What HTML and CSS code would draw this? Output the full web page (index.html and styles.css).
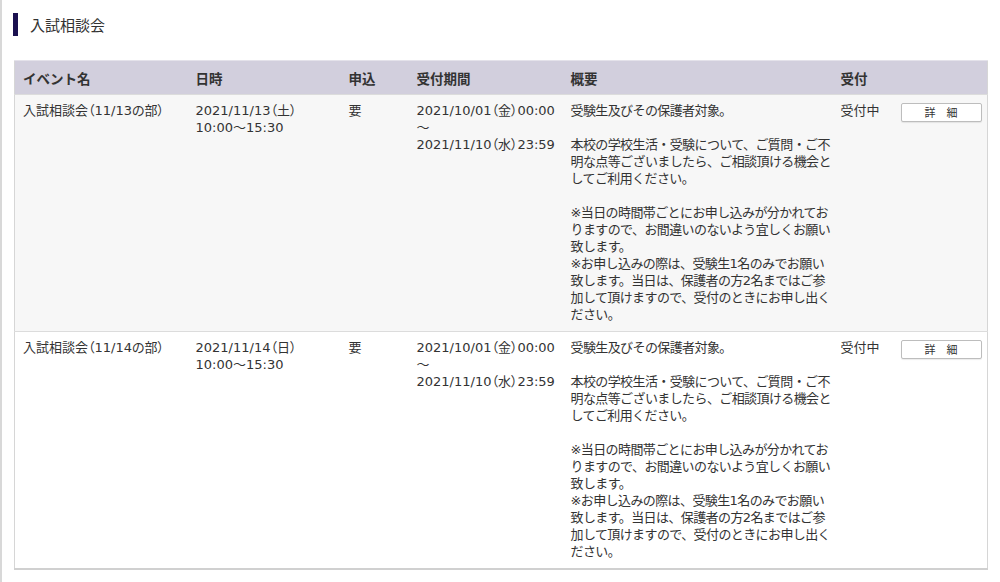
FILE: index.html
```html
<!DOCTYPE html>
<html lang="ja">
<head>
<meta charset="utf-8">
<title>入試相談会</title>
<link rel="stylesheet" href="styles.css">
</head>
<body>
<div class="page">
  <h2 class="heading">入試相談会</h2>
  <table class="events">
    <colgroup>
      <col class="c-name"><col class="c-date"><col class="c-apply"><col class="c-period"><col class="c-desc"><col class="c-status"><col class="c-btn">
    </colgroup>
    <thead>
      <tr><th>イベント名</th><th>日時</th><th>申込</th><th>受付期間</th><th>概要</th><th>受付</th><th></th></tr>
    </thead>
    <tbody>
      <tr class="odd">
        <td class="p">入試相談会（11/13の部）</td>
        <td class="p">2021/11/13（土）<br>10:00～15:30</td>
        <td>要</td>
        <td class="p nw">2021/10/01（金）00:00<br>～<br>2021/11/10（水）23:59</td>
        <td class="desc nw">受験生及びその保護者対象。<br><br>本校の学校生活・受験について、ご質問・ご不<br>明な点等ございましたら、ご相談頂ける機会と<br>してご利用ください。<br><br>※当日の時間帯ごとにお申し込みが分かれてお<br>りますので、お間違いのないよう宜しくお願い<br>致します。<br>※お申し込みの際は、受験生1名のみでお願い<br>致します。当日は、保護者の方2名まではご参<br>加して頂けますので、受付のときにお申し出く<br>ださい。</td>
        <td>受付中</td>
        <td><button class="detail" type="button">詳　細</button></td>
      </tr>
      <tr>
        <td class="p">入試相談会（11/14の部）</td>
        <td class="p">2021/11/14（日）<br>10:00～15:30</td>
        <td>要</td>
        <td class="p nw">2021/10/01（金）00:00<br>～<br>2021/11/10（水）23:59</td>
        <td class="desc nw">受験生及びその保護者対象。<br><br>本校の学校生活・受験について、ご質問・ご不<br>明な点等ございましたら、ご相談頂ける機会と<br>してご利用ください。<br><br>※当日の時間帯ごとにお申し込みが分かれてお<br>りますので、お間違いのないよう宜しくお願い<br>致します。<br>※お申し込みの際は、受験生1名のみでお願い<br>致します。当日は、保護者の方2名まではご参<br>加して頂けますので、受付のときにお申し出く<br>ださい。</td>
        <td>受付中</td>
        <td><button class="detail" type="button">詳　細</button></td>
      </tr>
    </tbody>
  </table>
</div>
</body>
</html>
```
FILE: styles.css
```css
html, body {
  margin: 0;
  padding: 0;
  background: #fff;
}
body {
  font-family: "DejaVu Sans", "Noto Sans CJK JP", sans-serif;
  color: #333;
  font-size: 13px;
  border-left: 2px solid #d8d8d8;
  min-height: 582px;
  box-sizing: border-box;
}
.page {
  padding: 13px 13px 0 11px;
}
.heading {
  margin: 0;
  font-weight: normal;
  font-size: 15px;
  line-height: 23px;
  color: #333;
  border-left: 5px solid #1b1150;
  padding-left: 12px;
  font-family: "Noto Sans CJK JP", sans-serif;
}
.events {
  margin-top: 24px;
  margin-left: 1px;
  width: 973px;
  table-layout: fixed;
  border-collapse: collapse;
  border: 1px solid #d6d6d6;
  border-bottom: 2px solid #d0d0d0;
}
.c-name { width: 173px; }
.c-date { width: 153px; }
.c-apply { width: 68px; }
.c-period { width: 154px; }
.c-desc { width: 270px; }
.c-status { width: 60px; }
.c-btn { width: 95px; }
.events thead th {
  background: #d2cfdd;
  text-align: left;
  font-weight: bold;
  font-size: 13.5px;
  height: 33px;
  padding: 0 8px;
  font-family: "Noto Sans CJK JP", sans-serif;
  color: #333;
  border-top: 1px solid #e4e2ea;
}
.events td {
  vertical-align: top;
  padding: 7px 8px 8px;
  line-height: 17px;
  border-top: 1px solid #dcdcdc;
}
.events tr.odd td {
  background: #f7f7f7;
}
.p {
  font-feature-settings: "palt";
}
.desc {
  letter-spacing: -0.6px;
}
.nw {
  white-space: nowrap;
}
.detail {
  display: block;
  width: 81px;
  height: 19px;
  margin: 1px 0 0 0;
  padding: 0;
  background: #fff;
  border: 1px solid #bdbdbd;
  border-radius: 2px;
  box-shadow: 0 1px 1px rgba(0,0,0,0.08);
  font-family: "Noto Sans CJK JP", sans-serif;
  font-size: 11px;
  color: #333;
  line-height: 17px;
}
```
